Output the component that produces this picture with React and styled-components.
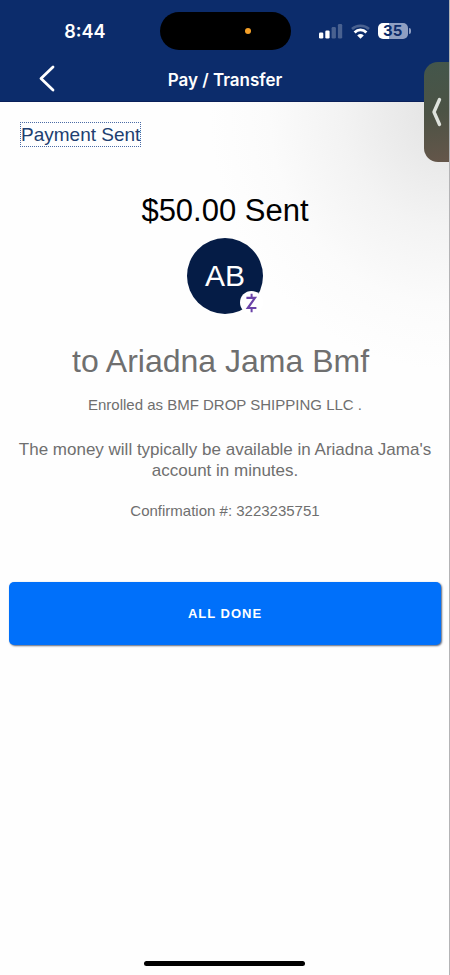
import React from "react";
import styled, { createGlobalStyle, ThemeProvider } from "styled-components";

const theme = {
  colors: {
    navy: "#0c2c6b",
    link: "#213e70",
    avatar: "#051c46",
    blue: "#0070fa",
    text: "#6f6f6f",
    zelle: "#6b43a8",
  },
  fonts: {
    body: '"Liberation Sans", Arial, sans-serif',
    system: "Inter, Roboto, sans-serif",
  },
};

const GlobalStyle = createGlobalStyle`
  *, *::before, *::after {
    box-sizing: border-box;
  }
  body {
    margin: 0;
    background: #fefefe;
  }
`;

const Page = styled.div`
  position: relative;
  display: flex;
  flex-direction: column;
  min-height: 100vh;
  overflow: hidden;
  border-right: 1px solid #b4b4b6;
  background: radial-gradient(
      ellipse 240px 260px at 100% 110px,
      #e2e2e2,
      #f3f3f3 45%,
      #fbfbfb 75%,
      #fefefe 100%
    );
  font-family: ${(props) => props.theme.fonts.body};
  color: ${(props) => props.theme.colors.text};
`;

const Header = styled.header`
  margin-right: -1px;
  background: ${(props) => props.theme.colors.navy};
  border-bottom: 1px solid #0a205a;
  font-family: ${(props) => props.theme.fonts.system};
  color: #fff;
`;

const StatusBar = styled.div`
  display: grid;
  grid-template-columns: 1fr 131px 1fr;
  align-items: center;
  padding-top: 12px;
`;

const Time = styled.span`
  padding-left: 10px;
  font-size: 18px;
  font-weight: 600;
  text-align: center;
`;

const Island = styled.div`
  display: flex;
  align-items: center;
  justify-content: flex-end;
  height: 38px;
  padding-right: 40px;
  border-radius: 19px;
  background: #000;
`;

const MicDot = styled.span`
  width: 6px;
  height: 6px;
  border-radius: 50%;
  background: #f5a028;
`;

const StatusIcons = styled.div`
  display: flex;
  align-items: center;
  justify-content: center;
  gap: 8px;
  padding-right: 14px;
`;

const Battery = styled.div`
  position: relative;
  width: 30px;
  height: 16px;
  border-radius: 5px;
  background: linear-gradient(to right, #fff 36%, #8f9fc2 36%);
  color: ${(props) => props.theme.colors.navy};
  font-size: 15px;
  font-weight: 700;
  line-height: 16px;
  text-align: center;

  &::after {
    content: "";
    position: absolute;
    top: 5px;
    right: -3px;
    width: 2px;
    height: 6px;
    border-radius: 0 2px 2px 0;
    background: #8f9fc2;
  }
`;

const NavBar = styled.nav`
  display: grid;
  grid-template-columns: 64px 1fr 64px;
  align-items: center;
  height: 51px;
`;

const Title = styled.h1`
  margin: 0;
  font-size: 17px;
  font-weight: 600;
  line-height: 24px;
  text-align: center;
  padding-top: 8px;
`;

const BackButton = styled.button`
  display: flex;
  justify-content: flex-end;
  padding: 5px 8px 0 0;
  border: 0;
  background: none;
  color: inherit;
`;

const SideTab = styled.button`
  position: absolute;
  top: 62px;
  right: -1px;
  display: flex;
  align-items: center;
  justify-content: center;
  width: 26px;
  height: 100px;
  padding: 0;
  border: 0;
  border-radius: 14px 0 0 14px;
  background: linear-gradient(170deg, #43564b, #4c5345 50%, #65564a);
  color: #dfe3dd;
`;

const Main = styled.main`
  display: flex;
  flex: 1;
  flex-direction: column;
  padding: 20px 8px 0 9px;
  text-align: center;
`;

const SentLink = styled.a`
  align-self: flex-start;
  margin-left: 11px;
  border: 1px dotted #4a6ba5;
  color: ${(props) => props.theme.colors.link};
  font-size: 19px;
  line-height: 23px;
  text-decoration: none;
`;

const Amount = styled.h2`
  margin: 46px 0 0;
  color: #000;
  font-size: 31px;
  font-weight: 400;
  line-height: 36px;
`;

const Avatar = styled.div`
  position: relative;
  align-self: center;
  width: 76px;
  height: 76px;
  margin-top: 9px;
  border-radius: 50%;
  background: ${(props) => props.theme.colors.avatar};
  color: #fff;
  font-size: 30px;
  line-height: 76px;
`;

const ZelleBadge = styled.span`
  position: absolute;
  right: 0;
  bottom: 0;
  display: flex;
  align-items: center;
  justify-content: center;
  width: 23px;
  height: 23px;
  border-radius: 50%;
  background: #fff;
`;

const Recipient = styled.h2`
  margin: 29px 0 0;
  font-size: 32px;
  font-weight: 400;
  line-height: 36px;
`;

const Detail = styled.p`
  margin: ${({ $gap }) => $gap}px 0 0;
  font-size: ${({ $large }) => ($large ? "17px" : "15px")};
  line-height: ${({ $large }) => ($large ? "21px" : "20px")};
`;

const DoneButton = styled.button`
  height: 63px;
  margin-top: 61px;
  border: 0;
  border-radius: 5px;
  background: ${(props) => props.theme.colors.blue};
  box-shadow: 1px 1px 2px #5a6478;
  color: #fff;
  font-family: ${(props) => props.theme.fonts.body};
  font-size: 13px;
  font-weight: 700;
  letter-spacing: 1px;
`;

const HomeIndicator = styled.div`
  align-self: center;
  width: 36%;
  height: 5px;
  margin-bottom: 9px;
  border-radius: 3px;
  background: #000;
`;

const SignalIcon = () => (
  <svg width="24" height="16" viewBox="0 0 24 16" fill="#fff" aria-hidden="true">
    <rect x="0" y="9.5" width="4.3" height="6" rx="1.3" />
    <rect x="6.3" y="7.5" width="4.3" height="8" rx="1.3" />
    <rect x="12.6" y="4" width="4.3" height="11.5" rx="1.3" opacity="0.25" />
    <rect x="18.9" y="1" width="4.3" height="14.5" rx="1.3" opacity="0.25" />
  </svg>
);

const WifiIcon = () => (
  <svg width="19" height="15" viewBox="0 0 19 15" fill="none" stroke="#fff" aria-hidden="true">
    <path d="M1 5C5.5 0.7 13.5 0.7 18 5" strokeWidth="2.6" opacity="0.25" />
    <path d="M3.6 8.4C7 5 12 5 15.4 8.4" strokeWidth="2.8" />
    <path d="M6.2 11.4C8.2 9.5 10.8 9.5 12.8 11.4L9.5 14.8Z" fill="#fff" stroke="none" />
  </svg>
);

const ZelleIcon = () => (
  <svg width="13" height="20" viewBox="0 0 13 20" fill="none" stroke={theme.colors.zelle} aria-hidden="true">
    <path d="M1.4 4.8H10L2.8 15H11.4" strokeWidth="2.2" />
    <path d="M6.6 0.8V4M6.6 16V19.3" strokeWidth="2" />
  </svg>
);

const App = () => {
  return (
    <ThemeProvider theme={theme}>
      <GlobalStyle />
      <Page>
        <Header>
          <StatusBar>
            <Time>8:44</Time>
            <Island>
              <MicDot />
            </Island>
            <StatusIcons>
              <SignalIcon />
              <WifiIcon />
              <Battery>35</Battery>
            </StatusIcons>
          </StatusBar>
          <NavBar>
            <BackButton aria-label="Back">
              <svg width="18" height="28" viewBox="0 0 18 28" fill="none" stroke="currentColor" strokeWidth="2.8" strokeLinecap="round" strokeLinejoin="round">
                <path d="M15 3L3 14.5L15 26" />
              </svg>
            </BackButton>
            <Title>Pay / Transfer</Title>
          </NavBar>
        </Header>
        <SideTab aria-label="Open panel">
          <svg width="12" height="30" viewBox="0 0 12 30" fill="none" stroke="currentColor" strokeWidth="3.4" strokeLinecap="round" strokeLinejoin="round">
            <path d="M8.5 2.5L3 15L8.5 27.5" />
          </svg>
        </SideTab>
        <Main>
          <SentLink href="#payment-sent">Payment Sent</SentLink>
          <Amount>$50.00 Sent</Amount>
          <Avatar>
            AB
            <ZelleBadge>
              <ZelleIcon />
            </ZelleBadge>
          </Avatar>
          <Recipient>to Ariadna Jama Bmf&nbsp;</Recipient>
          <Detail $gap={16}>Enrolled as BMF DROP SHIPPING LLC .</Detail>
          <Detail $gap={24} $large>
            The money will typically be available in Ariadna Jama's account in
            minutes.
          </Detail>
          <Detail $gap={20}>Confirmation #: 3223235751</Detail>
          <DoneButton>ALL DONE</DoneButton>
        </Main>
        <HomeIndicator />
      </Page>
    </ThemeProvider>
  );
};

export default App;
